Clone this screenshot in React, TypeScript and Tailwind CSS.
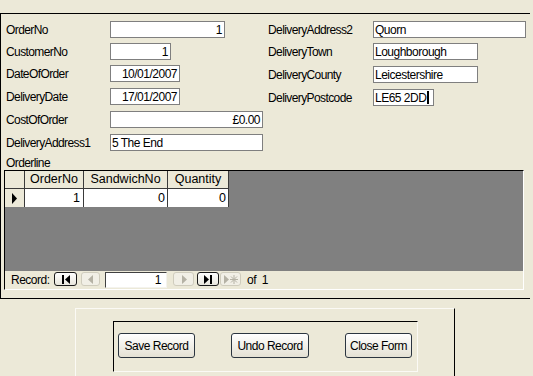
import React from "react";

const FONT = "font-['Liberation_Sans',Arial,sans-serif]";

function Box({ w, value, align = "left", cursor = false }: { w: number; value: string; align?: "left" | "right"; cursor?: boolean }) {
  return (
    <div
      className={`h-[17px] bg-white border border-[#7f7f7f] flex items-center ${align === "right" ? "justify-end pr-[2px]" : "justify-start pl-[1px]"} text-[12px] tracking-[-0.5px] leading-none text-black overflow-hidden`}
      style={{ width: w }}
    >
      <span className="whitespace-nowrap">{value}</span>
      {cursor && <span className="inline-block w-[2px] h-[13px] bg-black ml-[1px]" />}
    </div>
  );
}

function Row({ label, labelW, mt, children }: { label: string; labelW: number; mt: number; children: React.ReactNode }) {
  return (
    <div className="flex items-center h-[17px]" style={{ marginTop: mt }}>
      <div className="text-[12px] tracking-[-0.6px] leading-none text-black whitespace-nowrap" style={{ width: labelW }}>
        {label}
      </div>
      {children}
    </div>
  );
}

function NavBtn({ w, enabled, children }: { w: number; enabled: boolean; children: React.ReactNode }) {
  return (
    <div
      className={`h-[14px] rounded-[3px] border flex items-center justify-center ${enabled ? "border-[#1a1a1a] bg-gradient-to-b from-white to-[#e8e6dc]" : "border-[#cfccbd] bg-[#f1efe6]"}`}
      style={{ width: w }}
    >
      {children}
    </div>
  );
}

function Btn({ w, label, ml }: { w: number; label: string; ml: number }) {
  return (
    <div
      className="h-[25px] rounded-[3px] border border-[#2b3540] bg-gradient-to-b from-white to-[#e4e1d4] flex items-center justify-center text-[12px] tracking-[-0.5px] leading-none text-black whitespace-nowrap"
      style={{ width: w, marginLeft: ml }}
    >
      {label}
    </div>
  );
}

export default function App() {
  return (
    <div className={`w-[533px] h-[376px] bg-[#ECE9D8] overflow-hidden ${FONT}`}>
      <div className="h-[13px]" />
      {/* form section */}
      <div className="w-[530px] h-[286px] border-t border-l border-b border-black flex flex-col">
        <div className="flex h-[142px]">
          <div className="w-[267px] pl-[5px] pt-[7px]">
            <Row label="OrderNo" labelW={104} mt={0}>
              <Box w={115} value="1" align="right" />
            </Row>
            <Row label="CustomerNo" labelW={104} mt={5}>
              <Box w={61} value="1" align="right" />
            </Row>
            <Row label="DateOfOrder" labelW={104} mt={5}>
              <Box w={70} value="10/01/2007" align="right" />
            </Row>
            <Row label="DeliveryDate" labelW={104} mt={6}>
              <Box w={70} value="17/01/2007" align="right" />
            </Row>
            <Row label="CostOfOrder" labelW={104} mt={6}>
              <Box w={153} value="£0.00" align="right" />
            </Row>
            <Row label="DeliveryAddress1" labelW={104} mt={6}>
              <Box w={153} value="5 The End" />
            </Row>
          </div>
          <div className="pt-[7px]">
            <Row label="DeliveryAddress2" labelW={105} mt={0}>
              <Box w={153} value="Quorn" />
            </Row>
            <Row label="DeliveryTown" labelW={105} mt={5}>
              <Box w={105} value="Loughborough" />
            </Row>
            <Row label="DeliveryCounty" labelW={105} mt={6}>
              <Box w={105} value="Leicestershire" />
            </Row>
            <Row label="DeliveryPostcode" labelW={105} mt={6}>
              <Box w={61} value="LE65 2DD" cursor />
            </Row>
          </div>
        </div>
        <div className="h-[14px] pl-[5px] flex items-center text-[12px] tracking-[-0.6px] leading-none text-black">Orderline</div>
        {/* subform */}
        <div className="ml-[3px] w-[520px] h-[120px] border-t border-l border-black border-r border-b border-r-white border-b-white flex flex-col">
          <div className="h-[100px] bg-[#808080]">
            <div className="grid grid-cols-[20px_59px_84px_61px] w-[224px] text-[12.5px] leading-none text-black">
              <div className="h-[18px] bg-[#ECE9D8] border-r border-b border-[#3a3a3a]" />
              <div className="h-[18px] bg-[#ECE9D8] border-r border-b border-[#3a3a3a] flex items-center justify-center">OrderNo</div>
              <div className="h-[18px] bg-[#ECE9D8] border-r border-b border-[#3a3a3a] flex items-center justify-center">SandwichNo</div>
              <div className="h-[18px] bg-[#ECE9D8] border-r border-b border-[#3a3a3a] flex items-center justify-center">Quantity</div>
              <div className="h-[18px] bg-[#ECE9D8] border-r border-[#3a3a3a] flex items-center justify-center">
                <svg width="7" height="11" viewBox="0 0 7 11"><path d="M1 0 L6 5.5 L1 11 Z" fill="black" /></svg>
              </div>
              <div className="h-[18px] bg-white border-r border-[#3a3a3a] flex items-center justify-end pr-[3px]">1</div>
              <div className="h-[18px] bg-white border-r border-[#3a3a3a] flex items-center justify-end pr-[2px]">0</div>
              <div className="h-[18px] bg-white border-r border-[#3a3a3a] flex items-center justify-end pr-[2px]">0</div>
            </div>
          </div>
          <div className="h-[18px] flex items-start pt-[1px] pl-[6px] text-[12px] tracking-[-0.5px] leading-none text-black">
            <div className="w-[43px] h-[16px] flex items-center whitespace-nowrap">Record:</div>
            <NavBtn w={23} enabled>
              <svg width="10" height="9" viewBox="0 0 10 9"><rect x="1" y="0" width="2" height="9" fill="black" /><path d="M9 0 L4 4.5 L9 9 Z" fill="black" /></svg>
            </NavBtn>
            <div className="ml-[4px]">
              <NavBtn w={19} enabled={false}>
                <svg width="6" height="9" viewBox="0 0 6 9"><path d="M5 0 L0 4.5 L5 9 Z" fill="#b5b2a5" /></svg>
              </NavBtn>
            </div>
            <div className="ml-[5px] w-[62px] h-[16px] bg-white border-t border-l border-[#404040] border-r border-b border-r-[#f4f3ee] border-b-[#f4f3ee] flex items-end justify-end pr-[5px] pb-[1px]">
              1
            </div>
            <div className="ml-[6px]">
              <NavBtn w={21} enabled={false}>
                <svg width="6" height="9" viewBox="0 0 6 9"><path d="M1 0 L6 4.5 L1 9 Z" fill="#b5b2a5" /></svg>
              </NavBtn>
            </div>
            <div className="ml-[3px]">
              <NavBtn w={22} enabled>
                <svg width="10" height="9" viewBox="0 0 10 9"><path d="M1 0 L6 4.5 L1 9 Z" fill="black" /><rect x="7" y="0" width="2" height="9" fill="black" /></svg>
              </NavBtn>
            </div>
            <div className="ml-[1px]">
              <NavBtn w={21} enabled={false}>
                <svg width="14" height="9" viewBox="0 0 14 9"><path d="M0 0 L5 4.5 L0 9 Z" fill="#b5b2a5" /><path d="M10 0 V9 M6 4.5 H14 M7 1.5 L13 7.5 M13 1.5 L7 7.5" stroke="#b5b2a5" strokeWidth="1" /></svg>
              </NavBtn>
            </div>
            <div className="ml-[6px] h-[16px] flex items-center whitespace-nowrap">of&nbsp; 1</div>
          </div>
        </div>
      </div>
      {/* bottom panel */}
      <div className="mt-[9px] ml-[75px] w-[380px] h-[68px] border-t border-l border-[#fbfaf5] border-r border-r-black">
        <div className="ml-[37px] mt-[12px] w-[305px] h-[51px] border-t border-l border-black border-r border-b border-r-[#fbfaf5] border-b-[#fbfaf5] flex items-start pt-[11px]">
          <Btn w={77} label="Save Record" ml={4} />
          <Btn w={78} label="Undo Record" ml={36} />
          <Btn w={67} label="Close Form" ml={36} />
        </div>
      </div>
    </div>
  );
}
